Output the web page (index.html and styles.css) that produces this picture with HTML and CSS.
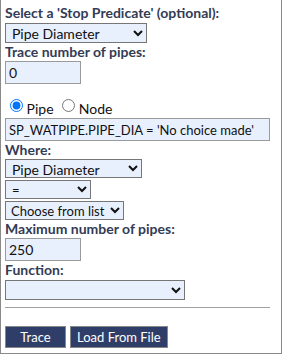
FILE: index.html
```html
<!DOCTYPE html>
<html lang="en">
<head>
    <meta charset="UTF-8">
    <title>Trace</title>
    <link rel="stylesheet" href="styles.css">
</head>
<body>
    <div class="panel">
        <label class="lbl" for="stopPredicate">Select a 'Stop Predicate' (optional):</label>
        <select id="stopPredicate" class="sel sel-stop">
            <option>Pipe Diameter</option>
        </select>

        <label class="lbl" for="traceCount">Trace number of pipes:</label>
        <input type="text" id="traceCount" class="num" value="0">

        <div class="kind">
            <input type="radio" name="kind" id="kindPipe" checked> <label for="kindPipe">Pipe</label>
            <input type="radio" name="kind" id="kindNode"> <label for="kindNode">Node</label>
        </div>
        <input type="text" class="expr" value="SP_WATPIPE.PIPE_DIA = 'No choice made'">

        <label class="lbl" for="whereField">Where:</label>
        <select id="whereField" class="sel sel-where">
            <option>Pipe Diameter</option>
        </select>
        <select class="sel sel-op">
            <option>=</option>
        </select>
        <select class="sel sel-val">
            <option>Choose from list</option>
        </select>

        <label class="lbl" for="maxPipes">Maximum number of pipes:</label>
        <input type="text" id="maxPipes" class="num" value="250">

        <label class="lbl" for="func">Function:</label>
        <select id="func" class="sel sel-func">
            <option></option>
        </select>

        <hr>

        <div class="buttons">
            <button class="btn btn-trace">Trace</button>
            <button class="btn">Load From File</button>
        </div>
    </div>
</body>
</html>
```
FILE: styles.css
```css
body {
    margin: 0;
    font-family: Lato, "Open Sans", sans-serif;
    font-size: 14px;
    color: #333b55;
    background: #fff;
}

.panel {
    width: 282px;
    height: 354px;
    box-sizing: border-box;
    border: 1px solid #8a8a8a;
    border-top: none;
    padding: 4px 4px 0 4px;
}

.lbl {
    display: block;
    font-weight: bold;
    line-height: 17px;
}

.sel {
    display: block;
    height: 19px;
    box-sizing: border-box;
    margin: 2px 0 0 0;
    padding: 0 0 0 2px;
    font-family: Lato, sans-serif;
    font-size: 14px;
    color: #111;
    background-color: #e8f0fe;
    border: 1px solid #767676;
    border-radius: 0;
}

.sel-stop { width: 142px; height: 20px; }
.sel-where { width: 137px; margin-top: 1px; }
.sel-op { width: 86px; font-size: 13px; }
.sel-val { width: 119px; font-size: 13px; padding-left: 1px; }
.sel-func { width: 180px; height: 20px; }

.num, .expr {
    display: block;
    height: 23px;
    box-sizing: border-box;
    padding: 0 3px;
    margin: 1px 0 0 0;
    font-family: Lato, sans-serif;
    font-size: 14px;
    color: #111;
    background-color: #e8f0fe;
    border: 1px solid #9a9a9a;
    border-radius: 0;
}

.num { width: 76px; }
.expr { width: 265px; margin-top: 2px; font-size: 13px; }

.kind {
    margin-top: 12px;
    height: 20px;
    line-height: 20px;
    white-space: nowrap;
}

.kind input {
    width: 13px;
    height: 13px;
    margin: 3px 0 0 5px;
}

.kind label {
    color: #111;
    font-size: 14px;
    position: relative;
    top: 2px;
}

hr {
    width: 265px;
    margin: 7px 0 0 0;
    border: none;
    border-top: 1px solid #a0a0a0;
    height: 0;
}

.buttons {
    display: flex;
    gap: 4px;
    margin-top: 18px;
}

.btn {
    font-family: Lato, sans-serif;
    font-size: 13px;
    height: 22px;
    padding: 0 6px;
    color: #fff;
    background-color: #2f3e69;
    border: 1px solid #888;
    border-radius: 0;
}

.btn-trace { width: 61px; }
```
